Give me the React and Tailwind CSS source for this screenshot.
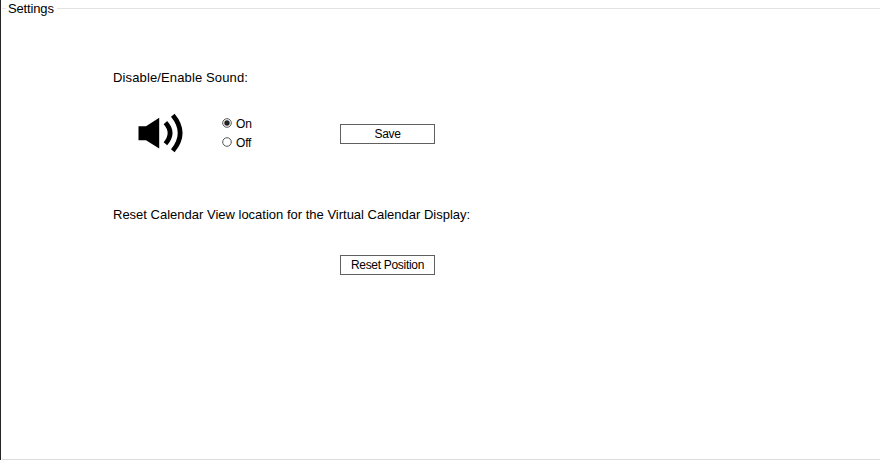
function Radio({ label, checked, onChange }) {
  return (
    <label className="flex h-[19px] items-center">
      <input type="radio" name="sound" className="peer sr-only" checked={checked} onChange={onChange} />
      <svg width="10" height="10" viewBox="0 0 10 10" className="mr-[4px] shrink-0">
        <circle cx="5" cy="5" r="4.3" fill="#fff" stroke="#444" strokeWidth="0.9" />
        {checked && <circle cx="5" cy="5" r="2.7" fill="#222" />}
      </svg>
      <span className="pt-[3px] text-[12px] leading-[19px] tracking-[-0.2px]">{label}</span>
    </label>
  );
}

function Speaker() {
  return (
    <svg width="46" height="40" viewBox="0 0 46 40" className="shrink-0">
      <path d="M.5 13.2H8L21.2 4.8V35.5L8 27.2H.5Z" fill="#000" />
      <path d="M27.4 9.6Q36.8 20 27.4 30.8M34.8 2.2Q49.5 20 34.8 37.8" fill="none" stroke="#000" strokeWidth="4.7" />
    </svg>
  );
}

function Button({ children }) {
  return (
    <button className="flex h-5 w-[95px] items-center justify-center whitespace-nowrap border border-[#606060] bg-white text-[12px] leading-[18px] tracking-[-0.3px]">
      {children}
    </button>
  );
}

export default function App() {
  return (
    <main className="flex h-[460px] w-[880px] flex-col overflow-hidden border-l border-[#252528] bg-white font-['Liberation_Sans',Arial,sans-serif] text-black">
      <header className="flex h-[17px] shrink-0 items-center">
        <span className="ml-px h-px w-[4px] bg-[#e6e6e6]" />
        <h1 className="ml-[2px] w-[46px] whitespace-nowrap text-[13px] leading-[17px] tracking-[-0.15px]">Settings</h1>
        <span className="ml-[3px] h-px flex-1 bg-[#e2e2e2]" />
      </header>
      <section className="ml-[112px] mt-[52px]">
        <h2 className="text-[13px] leading-[17px] tracking-[0.13px]">Disable/Enable Sound:</h2>
        <div className="mt-[27px] flex h-[40px]">
          <div className="ml-[25px] w-[84px]"><Speaker /></div>
          <div className="w-[118px]">
            <Radio label="On" checked onChange={() => {}} />
            <Radio label="Off" checked={false} onChange={() => {}} />
          </div>
          <div className="pt-[11px]"><Button>Save</Button></div>
        </div>
      </section>
      <section className="ml-[112px] mt-[53px]">
        <h2 className="text-[13px] leading-[17px]">Reset Calendar View location for the Virtual Calendar Display:</h2>
        <div className="ml-[227px] mt-[32px]"><Button>Reset Position</Button></div>
      </section>
      <div className="ml-px mt-auto h-px shrink-0 bg-[#dcdcdc]" />
    </main>
  );
}
